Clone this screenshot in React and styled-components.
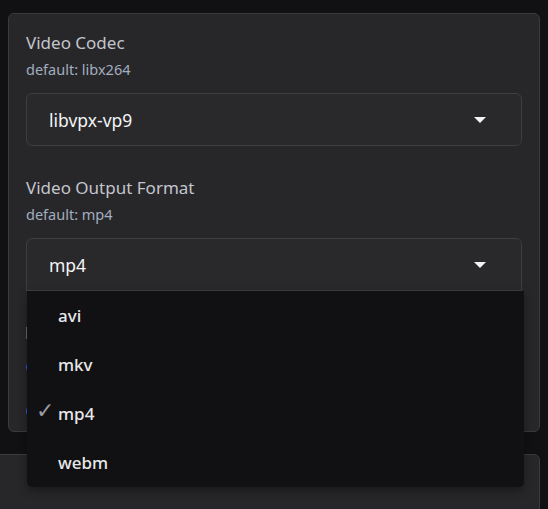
import React from "react";
import styled, { createGlobalStyle } from "styled-components";

const Global = createGlobalStyle`
  html, body { margin: 0; padding: 0; background: #111113; }
  body { font-family: "Noto Sans", "Open Sans", sans-serif; overflow: hidden; }
`;

const Page = styled.div`
  width: 548px;
  height: 509px;
  padding-top: 13px;
  box-sizing: border-box;
`;

const Panel = styled.section`
  position: relative;
  margin-left: 8px;
  width: 532px;
  height: 419px;
  box-sizing: border-box;
  background: #27272a;
  border: 1px solid #3a3a3f;
  border-radius: 6px;
  padding: 17px 17px 0 17px;
  display: flex;
  flex-direction: column;
`;

const Field = styled.div`
  display: flex;
  flex-direction: column;
  margin-bottom: ${(p) => p.$mb || 0}px;
  position: relative;
`;

const Label = styled.div`
  font-size: 17px;
  line-height: 24px;
  color: #c4c4cc;
`;

const Hint = styled.div`
  font-size: 14.5px;
  line-height: 20px;
  margin-top: 4px;
  color: #a3adbf;
`;

const Select = styled.div`
  margin-top: 14px;
  height: 53px;
  box-sizing: border-box;
  border: 1px solid #3d3d43;
  border-radius: ${(p) => (p.$open ? "6px 6px 0 0" : "6px")};
  background: #29292c;
  display: flex;
  align-items: center;
  justify-content: space-between;
  padding: 0 35px 0 22px;
  font-size: 17.5px;
  color: #f4f4f5;
`;

const Caret = styled.span`
  width: 0;
  height: 0;
  border-left: 6.5px solid transparent;
  border-right: 6.5px solid transparent;
  border-top: 6px solid #f4f4f5;
`;

const Menu = styled.ul`
  position: absolute;
  left: 1px;
  top: 100%;
  width: 497px;
  margin: 0;
  padding: 0;
  list-style: none;
  background: #111113;
  border-radius: 0 0 5px 5px;
  z-index: 2;
  box-shadow: 0 4px 10px rgba(0, 0, 0, 0.35);
`;

const Item = styled.li`
  height: 49px;
  display: flex;
  align-items: center;
  padding-left: 31px;
  position: relative;
  font-size: 17px;
  font-weight: 500;
  color: #e8e8ea;
`;

const Check = styled.span`
  position: absolute;
  left: 9px;
  top: 9px;
  font-family: "DejaVu Sans", sans-serif;
  font-size: 22px;
  font-weight: 300;
  color: #9c9ca3;
`;

const Hidden = styled.div`
  display: flex;
  flex-direction: column;
  margin-top: 36px;
`;

const LabelStub = styled.span`
  width: 10px;
  height: 12px;
  background: #6b6b72;
`;

const Dot = styled.span`
  width: 14px;
  height: 14px;
  margin-top: ${(p) => p.$mt}px;
  border-radius: 50%;
  background: #2563eb;
`;

const Lower = styled.section`
  margin-top: 22px;
  margin-left: -10px;
  width: 550px;
  height: 80px;
  background: #27272a;
  border: 1px solid #3a3a3f;
  border-radius: 6px;
  box-sizing: border-box;
`;

const options = ["avi", "mkv", "mp4", "webm"];

export default function App() {
  return (
    <Page>
      <Global />
      <Panel>
        <Field $mb={30}>
          <Label>Video Codec</Label>
          <Hint>default: libx264</Hint>
          <Select>
            <span>libvpx-vp9</span>
            <Caret />
          </Select>
        </Field>
        <Field>
          <Label>Video Output Format</Label>
          <Hint>default: mp4</Hint>
          <Select $open>
            <span>mp4</span>
            <Caret />
          </Select>
          <Menu>
            {options.map((o) => (
              <Item key={o}>
                {o === "mp4" && <Check>✓</Check>}
                {o}
              </Item>
            ))}
          </Menu>
        </Field>
        <Hidden>
          <LabelStub />
          <Dot $mt={21} />
          <Dot $mt={30} />
        </Hidden>
      </Panel>
      <Lower />
    </Page>
  );
}
